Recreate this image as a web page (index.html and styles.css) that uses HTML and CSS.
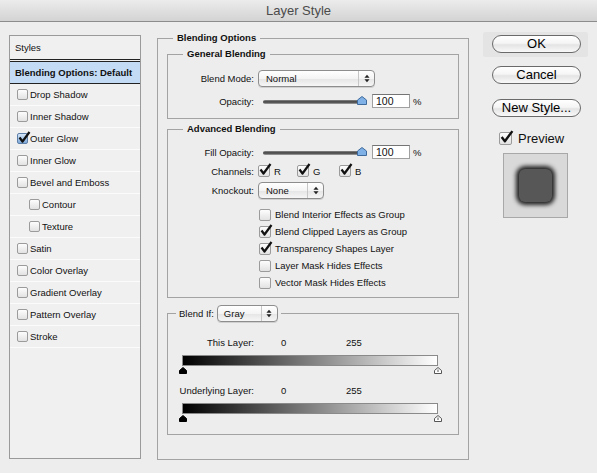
FILE: index.html
```html
<!DOCTYPE html>
<html lang="en">
<head>
  <meta charset="UTF-8">
  <title>Layer Style</title>
  <link rel="stylesheet" href="styles.css">
</head>
<body>
  <div class="window">
    <div class="titlebar">Layer Style</div>
    <div class="content">

      <div class="styles-panel">
        <div class="styles-head">Styles</div>
        <div class="style-sel">Blending Options: Default</div>
        <div class="style-row"><span class="cb"></span>Drop Shadow</div>
        <div class="style-row"><span class="cb"></span>Inner Shadow</div>
        <div class="style-row"><span class="cb blue"><svg viewBox="0 0 14 13"><path d="M2.5 6.5 L5.5 10.5 L12.5 1"/></svg></span>Outer Glow</div>
        <div class="style-row"><span class="cb"></span>Inner Glow</div>
        <div class="style-row"><span class="cb"></span>Bevel and Emboss</div>
        <div class="style-row sub"><span class="cb"></span>Contour</div>
        <div class="style-row sub"><span class="cb"></span>Texture</div>
        <div class="style-row"><span class="cb"></span>Satin</div>
        <div class="style-row"><span class="cb"></span>Color Overlay</div>
        <div class="style-row"><span class="cb"></span>Gradient Overlay</div>
        <div class="style-row"><span class="cb"></span>Pattern Overlay</div>
        <div class="style-row"><span class="cb"></span>Stroke</div>
      </div>

      <fieldset class="outer">
        <legend>Blending Options</legend>

        <fieldset class="group general">
          <legend>General Blending</legend>
          <div class="row">
            <span class="lbl">Blend Mode:</span>
            <div class="popup mode"><span class="popup-text">Normal</span><span class="popup-arrows"><svg viewBox="0 0 7 10"><path d="M3.5 0.5 L6.5 4 H0.5Z M0.5 6 H6.5 L3.5 9.5Z"/></svg></span></div>
          </div>
          <div class="row gap7">
            <span class="lbl">Opacity:</span>
            <div class="slider"><span class="track"></span><svg class="knob" viewBox="0 0 10 9"><path d="M5 0.5 L9.5 4 V8.5 H0.5 V4Z"/></svg></div>
            <span class="num">100</span><span class="pct">%</span>
          </div>
        </fieldset>

        <fieldset class="group advanced">
          <legend>Advanced Blending</legend>
          <div class="row">
            <span class="lbl">Fill Opacity:</span>
            <div class="slider"><span class="track"></span><svg class="knob" viewBox="0 0 10 9"><path d="M5 0.5 L9.5 4 V8.5 H0.5 V4Z"/></svg></div>
            <span class="num">100</span><span class="pct">%</span>
          </div>
          <div class="row channels">
            <span class="lbl">Channels:</span>
            <span class="chan r"><span class="cb on"><svg viewBox="0 0 14 13"><path d="M2.5 6.5 L5.5 10.5 L12.5 1"/></svg></span>R</span>
            <span class="chan g"><span class="cb on"><svg viewBox="0 0 14 13"><path d="M2.5 6.5 L5.5 10.5 L12.5 1"/></svg></span>G</span>
            <span class="chan"><span class="cb on"><svg viewBox="0 0 14 13"><path d="M2.5 6.5 L5.5 10.5 L12.5 1"/></svg></span>B</span>
          </div>
          <div class="row knock">
            <span class="lbl">Knockout:</span>
            <div class="popup knockout"><span class="popup-text">None</span><span class="popup-arrows"><svg viewBox="0 0 7 10"><path d="M3.5 0.5 L6.5 4 H0.5Z M0.5 6 H6.5 L3.5 9.5Z"/></svg></span></div>
          </div>
          <div class="checklist">
            <div class="check-row"><span class="cb"></span>Blend Interior Effects as Group</div>
            <div class="check-row"><span class="cb on"><svg viewBox="0 0 14 13"><path d="M2.5 6.5 L5.5 10.5 L12.5 1"/></svg></span>Blend Clipped Layers as Group</div>
            <div class="check-row"><span class="cb on"><svg viewBox="0 0 14 13"><path d="M2.5 6.5 L5.5 10.5 L12.5 1"/></svg></span>Transparency Shapes Layer</div>
            <div class="check-row"><span class="cb"></span>Layer Mask Hides Effects</div>
            <div class="check-row"><span class="cb"></span>Vector Mask Hides Effects</div>
          </div>
        </fieldset>

        <fieldset class="group blendif">
          <legend>
            <span>Blend If:</span>
            <span class="popup gray"><span class="popup-text">Gray</span><span class="popup-arrows"><svg viewBox="0 0 7 10"><path d="M3.5 0.5 L6.5 4 H0.5Z M0.5 6 H6.5 L3.5 9.5Z"/></svg></span></span>
          </legend>
          <div class="range-row first">
            <span class="lbl">This Layer:</span>
            <span class="v0">0</span><span>255</span>
          </div>
          <div class="grad"></div>
          <div class="thumbs">
            <svg viewBox="0 0 8 7"><path class="dark" d="M4 0.5 L7.5 3.5 V6.5 H0.5 V3.5Z"/></svg>
            <svg viewBox="0 0 8 7"><path class="light" d="M4 0.5 L7.5 3.5 V6.5 H0.5 V3.5Z"/><path class="mark" d="M4 2.5 V5"/></svg>
          </div>
          <div class="range-row">
            <span class="lbl">Underlying Layer:</span>
            <span class="v0">0</span><span>255</span>
          </div>
          <div class="grad"></div>
          <div class="thumbs">
            <svg viewBox="0 0 8 7"><path class="dark" d="M4 0.5 L7.5 3.5 V6.5 H0.5 V3.5Z"/></svg>
            <svg viewBox="0 0 8 7"><path class="light" d="M4 0.5 L7.5 3.5 V6.5 H0.5 V3.5Z"/><path class="mark" d="M4 2.5 V5"/></svg>
          </div>
        </fieldset>
      </fieldset>

      <div class="side">
        <div class="ok-ring"><button class="btn">OK</button></div>
        <button class="btn cancel">Cancel</button>
        <button class="btn newstyle">New Style...</button>
        <div class="preview-check">
          <span class="cb big on"><svg viewBox="0 0 14 13"><path d="M2.5 6.5 L5.5 10.5 L12.5 1"/></svg></span>
          Preview
        </div>
        <div class="preview-box"><div class="preview-shape"></div></div>
      </div>

    </div>
  </div>
</body>
</html>
```

FILE: styles.css
```css
body {
  margin: 0;
  background: #ededed;
  font-family: "Liberation Sans", Arial, sans-serif;
  font-size: 9.5px;
  color: #111;
}
.window {
  width: 597px;
  height: 473px;
  background: #ededed;
  overflow: hidden;
}
.titlebar {
  height: 21px;
  border-bottom: 1px solid #8c8c8c;
  background: linear-gradient(#ececec, #d3d3d3);
  text-align: center;
  font-size: 13px;
  line-height: 22px;
  color: #4b4b4b;
}
.content {
  display: flex;
  align-items: flex-start;
  padding: 10px 0 0 9px;
}

/* left list */
.styles-panel {
  width: 132px;
  height: 424px;
  box-sizing: border-box;
  margin-top: 3px;
  border: 1px solid #9a9a9a;
  background: #f0f0f0;
}
.styles-head {
  height: 23px;
  line-height: 23px;
  padding-left: 5px;
  border-bottom: 1px solid #222;
  margin-bottom: 1px;
}
.style-sel {
  height: 21px;
  line-height: 21px;
  padding-left: 5px;
  border-top: 1px solid #222;
  border-bottom: 1px solid #222;
  background: #c4dbf6;
  font-weight: bold;
}
.style-row {
  height: 21px;
  border-bottom: 1px solid #fbfbfb;
  display: flex;
  align-items: center;
  gap: 2px;
  padding-left: 7px;
}
.style-row.sub {
  padding-left: 19px;
}

/* checkboxes */
.cb {
  position: relative;
  flex: none;
  width: 11px;
  height: 11px;
  box-sizing: border-box;
  border: 1px solid #9b9b9b;
  border-radius: 2px;
  background: linear-gradient(#fdfdfd, #e2e2e2);
}
.cb.blue {
  border-color: #5d7fa8;
  background: linear-gradient(#d5e6f8, #7ea9da);
}
.cb svg {
  position: absolute;
  left: -1px;
  top: -3px;
  width: 14px;
  height: 13px;
}
.cb path {
  fill: none;
  stroke: #111;
  stroke-width: 2.2;
  stroke-linejoin: round;
}

/* fieldsets */
fieldset {
  margin: 0;
  min-width: 0;
  border: 1px solid #a3a3a3;
}
legend {
  padding: 0 4px;
  line-height: 12px;
  font-weight: bold;
}
.outer {
  width: 312px;
  box-sizing: border-box;
  margin-left: 16px;
  padding: 4px 9px 24px;
}
.outer > legend {
  margin-left: 6px;
}
.group {
  padding: 10px 0 10px;
}
.group > legend {
  margin-left: 15px;
}
.advanced {
  margin-top: 4px;
  padding-bottom: 6px;
}
.blendif {
  margin-top: 7px;
  padding: 0 0 12px;
}
.blendif > legend {
  margin-left: 8px;
  padding: 0 3px;
  display: flex;
  align-items: center;
  gap: 3px;
  font-weight: normal;
  line-height: 17px;
}

.row {
  display: flex;
  align-items: center;
  height: 17px;
}
.row.gap7 {
  margin-top: 7px;
  height: 14px;
}
.advanced .row:first-of-type {
  height: 14px;
}
.lbl {
  width: 86px;
  flex: none;
  text-align: right;
  margin-right: 4px;
}

/* popup buttons */
.popup {
  display: flex;
  height: 17px;
  box-sizing: border-box;
  border: 1px solid #8d8d8d;
  border-radius: 4px;
  background: linear-gradient(#ffffff, #f4f4f4 50%, #e6e6e6 55%, #f6f6f6);
  box-shadow: 0 1px 0 rgba(0, 0, 0, 0.12);
  font-weight: normal;
}
.popup-text {
  flex: 1;
  padding-left: 7px;
  line-height: 15px;
}
.popup-arrows {
  width: 15px;
  border-left: 1px solid #c6c6c6;
  display: flex;
  align-items: center;
  justify-content: center;
}
.popup-arrows svg {
  width: 6px;
  height: 9px;
}
.popup-arrows path {
  fill: #222;
}
.mode {
  width: 117px;
}
.knockout {
  width: 66px;
}
.gray {
  width: 61px;
}
.gray .popup-text {
  padding-left: 6px;
}

/* sliders */
.slider {
  position: relative;
  width: 104px;
  height: 14px;
  margin-left: 5px;
}
.track {
  position: absolute;
  left: 0;
  right: 5px;
  top: 6px;
  height: 4px;
  border-radius: 2px;
  background: linear-gradient(#8a8a8a, #3c3c3c 50%, #a8a8a8);
}
.knob {
  position: absolute;
  right: 0;
  top: 2px;
  width: 10px;
  height: 9px;
}
.knob path {
  fill: #7fb0e6;
  stroke: #3f6a9c;
  stroke-width: 1;
}
.num {
  width: 38px;
  height: 14px;
  box-sizing: border-box;
  margin-left: 5px;
  border: 1px solid #a0a0a0;
  border-top-color: #747474;
  background: #fff;
  padding-left: 3px;
  line-height: 12px;
  font-size: 10.5px;
}
.pct {
  margin-left: 3px;
}

.channels {
  margin-top: 6px;
  height: 12px;
}
.chan {
  display: flex;
  align-items: center;
  gap: 4px;
  width: 39px;
}
.chan.g {
  width: 42px;
}
.channels .cb,
.checklist .cb {
  width: 12px;
  height: 12px;
}
.knock {
  margin-top: 5px;
}
.checklist {
  margin-top: 7px;
  padding-left: 91px;
}
.check-row {
  height: 17px;
  display: flex;
  align-items: center;
  gap: 4px;
}

/* blend if */
.range-row {
  display: flex;
  align-items: center;
  height: 12px;
  margin-top: 10px;
}
.range-row.first {
  margin-top: 14px;
}
.range-row .lbl {
  margin-right: 27px;
}
.v0 {
  width: 65px;
}
.grad {
  width: 254px;
  height: 9px;
  margin: 7px 0 0 14px;
  border: 1px solid #8a8a8a;
  background: linear-gradient(to right, #000, #fff);
}
.thumbs {
  display: flex;
  justify-content: space-between;
  width: 263px;
  height: 7px;
  margin: 1px 0 0 11px;
}
.thumbs svg {
  width: 8px;
  height: 7px;
}
.thumbs .dark {
  fill: #000;
  stroke: #000;
}
.thumbs .light {
  fill: #fff;
  stroke: #555;
}
.thumbs .mark {
  stroke: #555;
}

/* right column */
.side {
  width: 105px;
  margin-left: 14px;
  display: flex;
  flex-direction: column;
  align-items: flex-start;
}
.ok-ring {
  padding: 3px 7px 4px 9px;
  background: #e4e4e4;
  border-radius: 2px;
}
.btn {
  width: 89px;
  height: 18px;
  box-sizing: border-box;
  padding: 0;
  border: 1px solid #6a6a6a;
  border-radius: 9px;
  background: linear-gradient(#ffffff, #f5f5f5 45%, #e4e4e4 55%, #f9f9f9);
  font-family: "Liberation Sans", Arial, sans-serif;
  font-size: 13px;
  line-height: 16px;
  color: #000;
}
.cancel {
  margin: 9px 0 0 9px;
}
.newstyle {
  margin: 15px 0 0 9px;
}
.preview-check {
  display: flex;
  align-items: center;
  gap: 6px;
  margin: 15px 0 0 16px;
  font-size: 13px;
  height: 13px;
}
.cb.big {
  width: 13px;
  height: 13px;
}
.cb.big svg {
  width: 15px;
  height: 14px;
}
.preview-box {
  width: 65px;
  height: 65px;
  box-sizing: border-box;
  margin: 8px 0 0 20px;
  border: 1px solid #a8a8a8;
  background: #d9d9d9;
  display: flex;
  align-items: center;
  justify-content: center;
}
.preview-shape {
  width: 33px;
  height: 33px;
  border-radius: 6px;
  background: #575757;
  box-shadow: 0 0 4px 3px rgba(0, 0, 0, 0.85);
}
```
